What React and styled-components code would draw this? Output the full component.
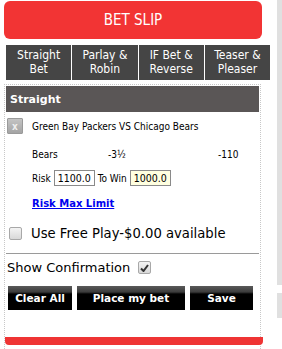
import React from 'react';
import styled, { createGlobalStyle } from 'styled-components';

const GlobalStyle = createGlobalStyle`
  html, body {
    margin: 0;
    padding: 0;
    background: #ffffff;
  }
  body {
    font-family: Tahoma, "DejaVu Sans", sans-serif;
    color: #000;
  }
`;

const tabs = [
  ['Straight', 'Bet'],
  ['Parlay &', 'Robin'],
  ['IF Bet &', 'Reverse'],
  ['Teaser &', 'Pleaser'],
];

const Page = styled.div`
  display: flex;
  width: 282px;
  height: 349px;
  overflow: hidden;
`;

const Slip = styled.div`
  width: 266px;
  padding: 1px 0 0 4px;
  display: flex;
  flex-direction: column;
`;

const Header = styled.div`
  width: 258px;
  height: 38px;
  background: #f23434;
  border-radius: 6px;
  display: flex;
  align-items: center;
  justify-content: center;
  color: #fff;
  font-family: "DejaVu Sans Condensed", "DejaVu Sans", sans-serif;
  font-size: 15px;
`;

const Tabs = styled.div`
  display: flex;
  gap: 1px;
  margin: 6px 0 0 2px;
  width: 264px;
`;

const Tab = styled.div`
  flex: 1;
  height: 35px;
  background: #454545;
  color: #fff;
  font-family: "DejaVu Sans Condensed", "DejaVu Sans", sans-serif;
  font-size: 12px;
  line-height: 13.5px;
  display: flex;
  flex-direction: column;
  align-items: center;
  justify-content: center;
`;

const Panel = styled.div`
  margin-top: 4px;
  width: 255px;
  border-left: 1px dotted #c8c8c8;
  border-right: 1px dotted #c8c8c8;
  border-top: 1px dotted #c8c8c8;
  padding: 1px 0 0 0;
  display: flex;
  flex-direction: column;
  flex: 1;
`;

const SectionHead = styled.div`
  height: 26px;
  margin: 0 1px;
  background: #5a5656;
  color: #fff;
  font-family: "DejaVu Sans", sans-serif;
  font-weight: bold;
  font-size: 11px;
  display: flex;
  align-items: center;
  padding-left: 4px;
`;

const SmallText = styled.div`
  font-family: "DejaVu Sans Condensed", "DejaVu Sans", sans-serif;
  font-size: 10px;
`;

const GameRow = styled(SmallText)`
  display: flex;
  align-items: center;
  gap: 9px;
  margin: 6px 0 0 2px;
  height: 16px;
`;

const RemoveBox = styled.div`
  width: 14px;
  height: 14px;
  border: 1px solid #9a9a9a;
  background: linear-gradient(#c4c4c4, #a4a4a4);
  color: #eee;
  font-size: 10px;
  font-weight: bold;
  display: flex;
  align-items: center;
  justify-content: center;
  border-radius: 1px;
`;

const LineRow = styled(SmallText)`
  display: grid;
  grid-template-columns: 76px 110px auto;
  margin: 15px 0 0 27px;
`;

const RiskRow = styled(SmallText)`
  display: flex;
  align-items: center;
  gap: 3px;
  margin: 10px 0 0 27px;
`;

const Amount = styled.div`
  width: 39px;
  height: 14px;
  border: 1px solid #8a8a8a;
  background: ${p => (p.$win ? '#ffffe0' : '#fff')};
  display: flex;
  align-items: center;
  justify-content: center;
  font-size: 10.5px;
`;

const MaxLink = styled.a`
  margin: 12px 0 0 27px;
  font-family: "DejaVu Sans", sans-serif;
  font-size: 10px;
  font-weight: bold;
  color: #0000ee;
  text-decoration: underline;
`;

const FreePlay = styled.label`
  display: flex;
  align-items: center;
  gap: 9px;
  margin: 17px 0 0 4px;
  font-family: "DejaVu Sans", sans-serif;
  font-size: 13.2px;
`;

const Box = styled.span`
  width: 11px;
  height: 11px;
  border: 1px solid #a8a8a8;
  border-radius: 2px;
  background: linear-gradient(#f4f4f4, #d8d8d8);
  display: inline-flex;
  align-items: center;
  justify-content: center;
  flex: none;
`;

const Divider = styled.div`
  margin: 12px 1px 0 1px;
  border-top: 1px solid #9a9a9a;
`;

const Confirm = styled.div`
  display: flex;
  align-items: center;
  gap: 8px;
  margin: 6px 0 0 2px;
  font-family: "DejaVu Sans", sans-serif;
  font-size: 13px;
`;

const Buttons = styled.div`
  display: flex;
  gap: 5px;
  margin: 11px 0 0 3px;
`;

const Button = styled.button`
  width: ${p => p.$w}px;
  height: 24px;
  border: none;
  padding: 0;
  background: linear-gradient(#5a5a5a 0, #3c3c3c 6px, #000 8px, #000 100%);
  color: #fff;
  font-family: "DejaVu Sans", sans-serif;
  font-weight: bold;
  font-size: 10.5px;
`;

const BottomBar = styled.div`
  width: 258px;
  height: 8px;
  margin-top: auto;
  margin-bottom: 4px;
  background: #ef3434;
  border-radius: 0 0 4px 4px;
`;

const Strip = styled.div`
  margin-left: 7px;
  width: 8px;
  display: flex;
  flex-direction: column;
  gap: 8px;
`;

const StripPiece = styled.div`
  height: ${p => p.$h}px;
  background: #e0e0e0;
`;

function Check() {
  return (
    <svg width="9" height="8" viewBox="0 0 9 8">
      <path d="M1 4.5 L3.5 7 L8 1" fill="none" stroke="#333" strokeWidth="2" />
    </svg>
  );
}

export default function App() {
  return (
    <Page>
      <GlobalStyle />
      <Slip>
        <Header>BET SLIP</Header>
        <Tabs>
          {tabs.map(([a, b]) => (
            <Tab key={a}>
              <span>{a}</span>
              <span>{b}</span>
            </Tab>
          ))}
        </Tabs>
        <Panel>
          <SectionHead>Straight</SectionHead>
          <GameRow>
            <RemoveBox>x</RemoveBox>
            <span>Green Bay Packers VS Chicago Bears</span>
          </GameRow>
          <LineRow>
            <span>Bears</span>
            <span>-3½</span>
            <span>-110</span>
          </LineRow>
          <RiskRow>
            <span>Risk</span>
            <Amount>1100.0</Amount>
            <span>To Win</span>
            <Amount $win>1000.0</Amount>
          </RiskRow>
          <MaxLink href="#">Risk Max Limit</MaxLink>
          <FreePlay>
            <Box />
            <span>Use Free Play-$0.00 available</span>
          </FreePlay>
          <Divider />
          <Confirm>
            <span>Show Confirmation</span>
            <Box><Check /></Box>
          </Confirm>
          <Buttons>
            <Button $w={64}>Clear All</Button>
            <Button $w={108}>Place my bet</Button>
            <Button $w={63}>Save</Button>
          </Buttons>
          <BottomBar />
        </Panel>
      </Slip>
      <Strip>
        <StripPiece $h={285} />
        <StripPiece $h={25} />
      </Strip>
    </Page>
  );
}
